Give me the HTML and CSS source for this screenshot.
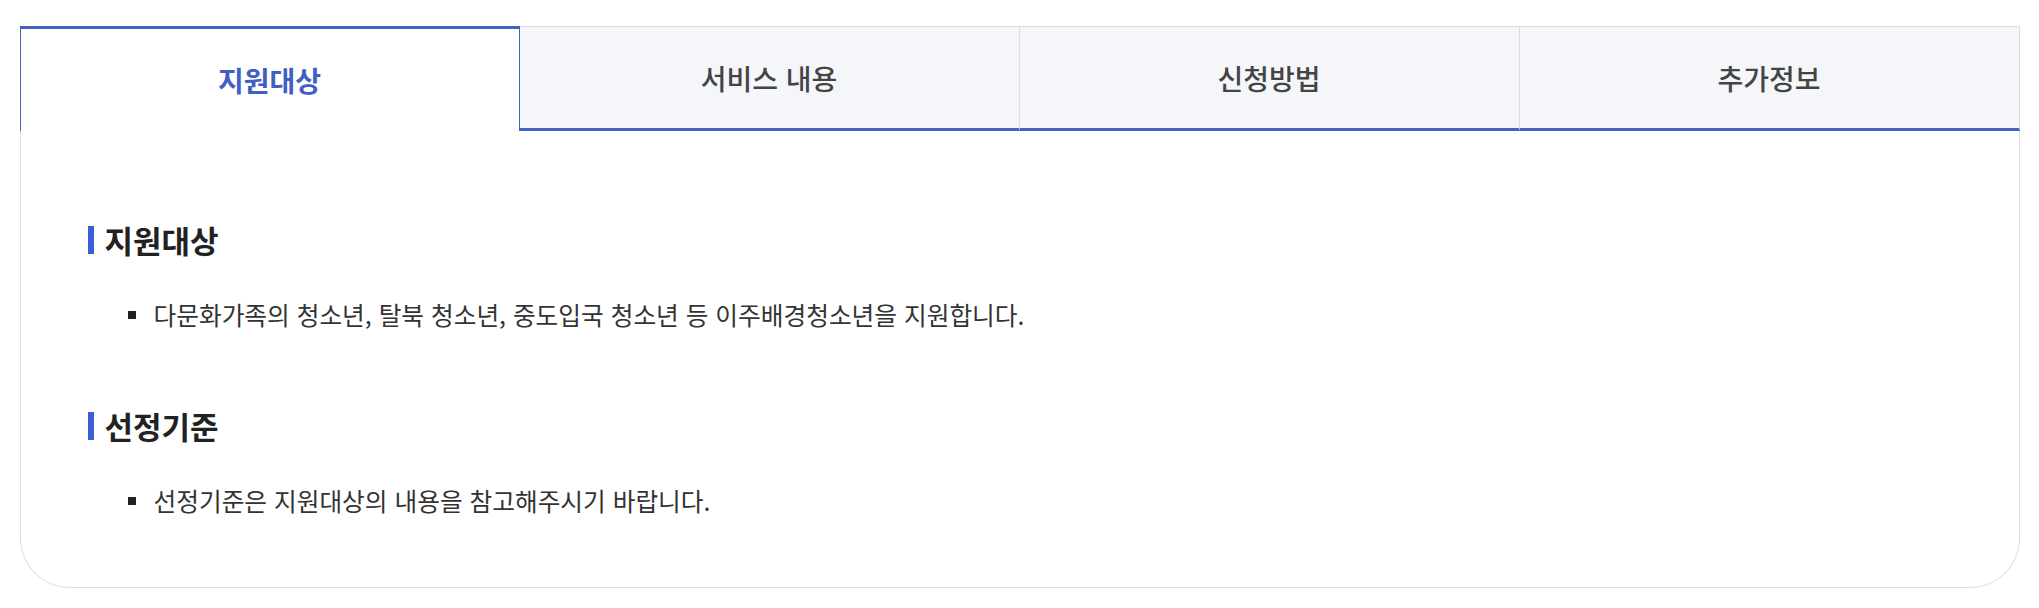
FILE: index.html
```html
<!DOCTYPE html>
<html lang="ko">
<head>
<meta charset="utf-8">
<title>지원대상</title>
<link rel="stylesheet" href="styles.css">
</head>
<body>
<div class="tabbox">
  <ul class="tabs">
    <li class="tab active">지원대상</li>
    <li class="tab">서비스 내용</li>
    <li class="tab">신청방법</li>
    <li class="tab">추가정보</li>
  </ul>
  <div class="panel">
    <section class="block">
      <h3 class="block-title">지원대상</h3>
      <ul class="bullets">
        <li>다문화가족의 청소년, 탈북 청소년, 중도입국 청소년 등 이주배경청소년을 지원합니다.</li>
      </ul>
    </section>
    <section class="block">
      <h3 class="block-title">선정기준</h3>
      <ul class="bullets">
        <li>선정기준은 지원대상의 내용을 참고해주시기 바랍니다.</li>
      </ul>
    </section>
  </div>
</div>
</body>
</html>
```

FILE: styles.css
```css
* { box-sizing: border-box; }

body {
  margin: 0;
  padding: 26px 0 20px;
  background: #fff;
  font-family: "Noto Sans CJK KR", "Noto Sans", sans-serif;
  color: #222;
}

.tabbox {
  width: 2000px;
  margin: 0 auto;
}

.tabs {
  display: grid;
  grid-template-columns: repeat(4, 1fr);
  margin: 0;
  padding: 0;
  list-style: none;
}

.tab {
  height: 105px;
  display: flex;
  align-items: center;
  justify-content: center;
  background: #f5f6fa;
  border-top: 1px solid #dcdde2;
  border-right: 1px solid #dcdde2;
  border-bottom: 3px solid #4262c4;
  font-size: 28px;
  font-weight: 500;
  color: #444;
}

.tab.active {
  background: #fff;
  border: 1px solid #4262c4;
  border-top-width: 3px;
  border-bottom: 0;
  color: #3f5fc4;
  font-weight: 700;
}

.panel {
  border: 1px solid #dedede;
  border-top: 0;
  border-radius: 0 0 50px 50px;
  padding: 91px 67px 68px;
}

.block + .block {
  margin-top: 75px;
}

.block-title {
  display: flex;
  align-items: center;
  gap: 11px;
  margin: 0;
  font-size: 31px;
  line-height: 36px;
  font-weight: 700;
  color: #222;
}

.block-title::before {
  content: "";
  width: 6px;
  height: 28px;
  background: #3b5fd4;
}

.bullets {
  list-style: none;
  margin: 38px 0 0;
  padding: 0 0 0 40px;
}

.bullets li {
  display: flex;
  align-items: center;
  gap: 18px;
  font-size: 24.7px;
  line-height: 37px;
  color: #333;
}

.bullets li::before {
  content: "";
  flex: none;
  width: 8px;
  height: 8px;
  background: #222;
}
```
